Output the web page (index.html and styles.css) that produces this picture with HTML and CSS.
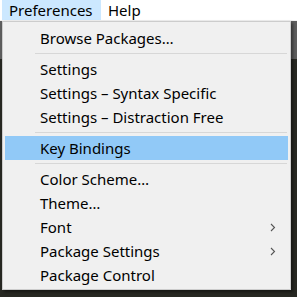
FILE: index.html
```html
<!DOCTYPE html>
<html>
<head>
<meta charset="utf-8">
<link rel="stylesheet" href="styles.css">
</head>
<body>
<div class="screen">
  <div class="menubar">
    <span class="top active">Preferences</span>
    <span class="top">Help</span>
  </div>
  <div class="backdrop">
    <div class="tabbar"></div>
    <div class="editor"></div>
  </div>
  <div class="menu">
    <div class="item">Browse Packages…</div>
    <div class="sep"></div>
    <div class="item">Settings</div>
    <div class="item">Settings – Syntax Specific</div>
    <div class="item">Settings – Distraction Free</div>
    <div class="sep"></div>
    <div class="item hl">Key Bindings</div>
    <div class="sep"></div>
    <div class="item">Color Scheme…</div>
    <div class="item">Theme…</div>
    <div class="item sub">Font<svg class="arrow" width="6" height="9" viewBox="0 0 6 9"><polyline points="1,1 4.5,4.5 1,8" fill="none" stroke="#555" stroke-width="1.1"/></svg></div>
    <div class="item sub">Package Settings<svg class="arrow" width="6" height="9" viewBox="0 0 6 9"><polyline points="1,1 4.5,4.5 1,8" fill="none" stroke="#555" stroke-width="1.1"/></svg></div>
    <div class="item">Package Control</div>
  </div>
</div>
</body>
</html>
```
FILE: styles.css
```css
html, body {
  margin: 0;
  padding: 0;
}
body {
  width: 297px;
  height: 297px;
  overflow: hidden;
  background: #23241f;
  font-family: "Noto Sans", "Open Sans", sans-serif;
  font-size: 15px;
  color: #000;
}
.screen {
  position: relative;
  width: 297px;
  height: 297px;
  display: flex;
  flex-direction: column;
}
.menubar {
  height: 20px;
  background: #ffffff;
  display: flex;
  padding-left: 2px;
  border-bottom: 1px solid #f0f0f0;
}
.top {
  display: block;
  height: 20px;
  line-height: 21px;
  padding: 0 7px;
}
.top.active {
  background: #cce8ff;
  width: 85px;
}
.backdrop {
  flex: 1;
  display: flex;
  flex-direction: column;
}
.tabbar {
  height: 38px;
  background: #5e5e5e;
}
.editor {
  flex: 1;
  background: #272822;
}
.menu {
  position: absolute;
  left: 2px;
  top: 21px;
  width: 289px;
  box-sizing: border-box;
  background: #f0f0f0;
  border: 1px solid #cccccc;
  padding: 4px 2px 2px 2px;
  box-shadow: 2px 2px 3px rgba(0, 0, 0, 0.45);
}
.item {
  height: 24px;
  line-height: 24px;
  padding-left: 35px;
  padding-right: 12px;
  display: flex;
  justify-content: space-between;
  align-items: center;
  white-space: nowrap;
}
.item.hl {
  background: #91c9f7;
}
.sep {
  height: 1px;
  background: #d7d7d7;
  margin: 3px 1px 3px 30px;
}
.arrow {
  display: block;
}
```
